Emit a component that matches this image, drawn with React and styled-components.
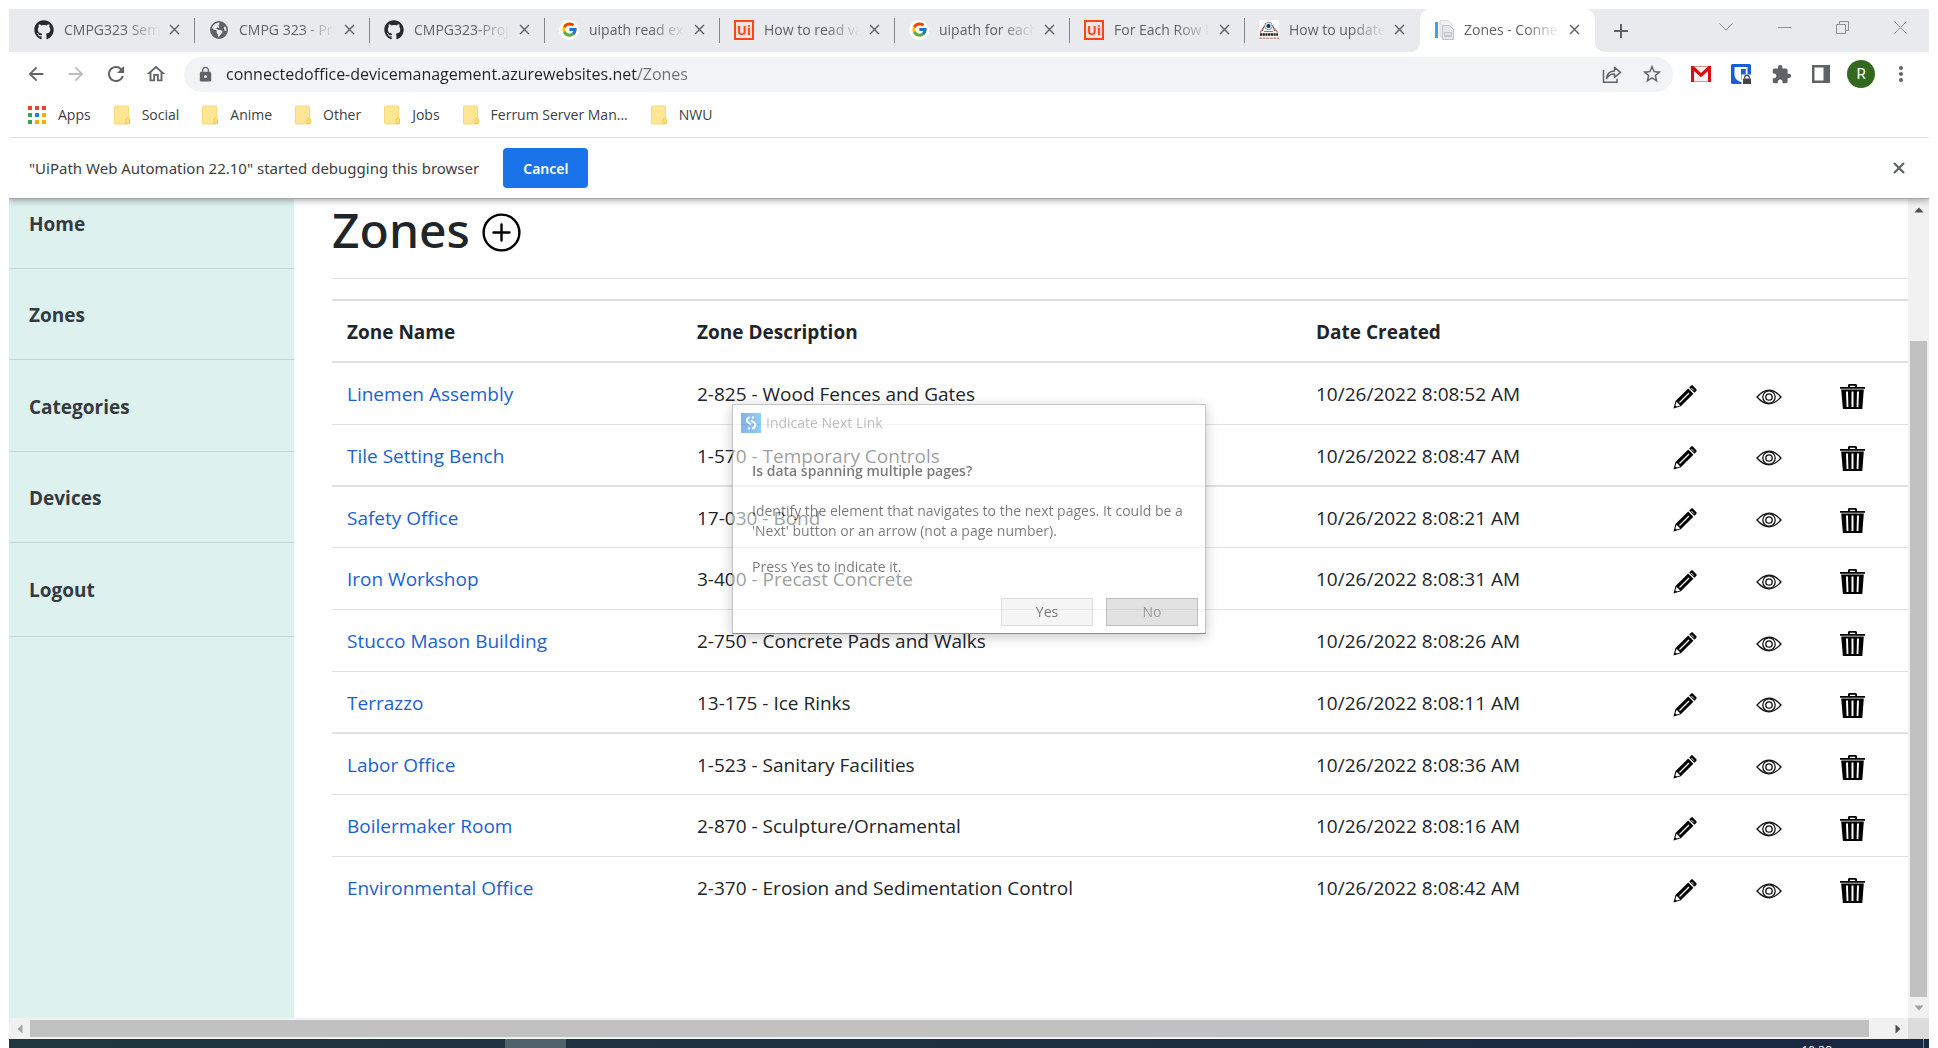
import React from 'react';
import styled, { createGlobalStyle } from 'styled-components';
import { FaGithub, FaEarthAmericas } from 'react-icons/fa6';
import { FcGoogle } from 'react-icons/fc';
import {
  MdAdd,
  MdArrowBack,
  MdArrowForward,
  MdClose,
  MdExtension,
  MdLock,
  MdMoreVert,
  MdOutlineHome,
  MdRefresh,
  MdStarOutline,
} from 'react-icons/md';

const font = `'Open Sans', 'Noto Sans', sans-serif`;

const GlobalStyle = createGlobalStyle`
  *, *::before, *::after { box-sizing: border-box; }
  body {
    margin: 0;
    background: #fff;
    color: #212529;
    font-family: ${font};
    overflow: hidden;
  }
  button, input { font-family: inherit; }
  svg { display: block; flex: none; }
`;

const Screen = styled.div`
  height: 100vh;
  padding: 9px 9px 0;
  display: flex;
  flex-direction: column;
`;

const IconButton = styled.button`
  flex: none;
  width: ${(p) => p.$width || 40}px;
  height: 28px;
  padding: 0;
  border: 0;
  background: none;
  color: ${(p) => p.$color || '#5f6368'};
  display: flex;
  align-items: center;
  justify-content: center;
`;

/* ---------- tab strip ---------- */

const TabStrip = styled.header`
  flex: none;
  height: 43px;
  padding-left: 11px;
  background: #e8eaed;
  display: flex;
  align-items: center;
`;

const Tab = styled.div`
  position: relative;
  flex: 0 1 175px;
  min-width: 0;
  height: 43px;
  padding: 0 8px 2px 14px;
  display: flex;
  align-items: center;
  gap: 10px;
  border-radius: 10px 10px 0 0;
  background: ${(p) => (p.$active ? '#fff' : 'transparent')};

  &::before,
  &::after {
    content: '';
    position: absolute;
    bottom: 0;
    width: 10px;
    height: 10px;
    display: ${(p) => (p.$active ? 'block' : 'none')};
  }
  &::before {
    left: -10px;
    background: radial-gradient(circle at 0 0, transparent 10px, #fff 10px);
  }
  &::after {
    right: -10px;
    background: radial-gradient(circle at 100% 0, transparent 10px, #fff 10px);
  }
`;

const TabDivider = styled.span`
  position: absolute;
  right: 0;
  top: 9px;
  width: 1px;
  height: 25px;
  background: #80868b;
`;

const TabTitle = styled.span`
  flex: 1;
  min-width: 0;
  overflow: hidden;
  white-space: nowrap;
  font-size: 14px;
  line-height: 24px;
  color: #5f6368;
  mask-image: linear-gradient(to right, #000 62px, transparent 96px);
`;

const CloseTab = styled(IconButton)`
  width: 26px;
  margin-left: -9px;
`;

const Favicon = styled.span`
  flex: none;
  width: 20px;
  height: 20px;
  display: flex;
  align-items: center;
  justify-content: center;
  border-radius: ${(p) => (p.$round ? '50%' : '0')};
  background: ${(p) => (p.$round ? '#fff' : 'transparent')};
  color: ${(p) => p.$color || '#24292f'};
`;

const UiMark = styled.span`
  width: 20px;
  height: 20px;
  border: 2px solid #fa4616;
  color: #fa4616;
  background: #f5e3df;
  font-size: 13px;
  font-weight: 700;
  line-height: 16px;
  text-align: center;
`;

const WindowButtons = styled.div`
  margin-left: auto;
  height: 36px;
  display: flex;
  align-items: center;
  align-self: flex-start;
`;

/* ---------- address bar ---------- */

const Toolbar = styled.div`
  flex: none;
  height: 44px;
  padding: 0 8px 0 7px;
  display: flex;
  align-items: center;
`;

const Omnibox = styled.label`
  flex: 1;
  height: 35px;
  margin: 0 8px;
  padding: 0 7px 0 13px;
  border-radius: 18px;
  background: #f1f3f4;
  display: flex;
  align-items: center;
  gap: 12px;
  color: #5f6368;
`;

const Address = styled.input`
  flex: 1;
  min-width: 0;
  height: 28px;
  padding: 0;
  border: 0;
  outline: 0;
  font-size: 16px;
  color: transparent;
  background: linear-gradient(to right, #202124 412px, #6b7075 412px);
  background-clip: text;
  -webkit-background-clip: text;
`;

const Avatar = styled.button`
  flex: none;
  width: 28px;
  height: 28px;
  margin: 0 6px;
  padding: 0;
  border: 0;
  border-radius: 50%;
  background: #33691e;
  color: #fff;
  font-family: Roboto, sans-serif;
  font-size: 15px;
`;

/* ---------- bookmarks ---------- */

const Bookmarks = styled.nav`
  flex: none;
  height: 42px;
  padding: 0 19px 3px;
  border-bottom: 1px solid #dadce0;
  display: flex;
  align-items: center;
  gap: 23px;
`;

const Bookmark = styled.a`
  display: flex;
  align-items: center;
  gap: 12px;
  font-size: 14px;
  line-height: 20px;
  color: #3c4043;
  text-decoration: none;
  white-space: nowrap;
`;

const AppsGrid = styled.span`
  display: grid;
  grid-template-columns: repeat(3, 4px);
  gap: 3px;
`;

const Dot = styled.span`
  height: 4px;
  background: ${(p) => p.$color};
`;

/* ---------- debugging notice ---------- */

const Notice = styled.div`
  position: relative;
  z-index: 1;
  flex: none;
  height: 61px;
  padding: 0 16px 0 20px;
  display: flex;
  align-items: center;
  gap: 24px;
  background: #fff;
  border-bottom: 1px solid #a5a8aa;
  box-shadow: 0 2px 6px rgba(0, 0, 0, 0.3);
  clip-path: inset(0 0 -10px 0);
  font-family: 'Noto Sans', sans-serif;
  font-size: 15px;
  color: #3c4043;
`;

const CancelButton = styled.button`
  height: 40px;
  padding: 0 20px;
  border: 0;
  border-radius: 4px;
  background: #1a73e8;
  color: #fff;
  font-size: 14px;
  font-weight: 600;
`;

const NoticeClose = styled(IconButton)`
  margin-left: auto;
  width: 28px;
`;

/* ---------- page ---------- */

const Viewport = styled.div`
  flex: 1;
  min-height: 0;
  display: flex;
`;

const Sidebar = styled.nav`
  flex: none;
  width: 285px;
  background: #ddf1ef;
  display: flex;
  flex-direction: column;
`;

const SideItem = styled.a`
  height: ${(p) => p.$height || 91}px;
  padding: 0 20px ${(p) => p.$bottom || 32}px;
  border: 0;
  border-bottom: 1px solid #c3d8d6;
  background: none;
  display: flex;
  align-items: flex-end;
  font-size: 19px;
  font-weight: 700;
  line-height: 24px;
  color: #343a40;
  text-decoration: none;
`;

const Main = styled.main`
  flex: 1;
  min-width: 0;
  padding-left: 38px;
`;

const TitleRow = styled.div`
  height: 80px;
  border-bottom: 1px solid #e0e1e2;
  display: flex;
  align-items: flex-start;
  gap: 12px;
`;

const Title = styled.h1`
  margin: 0;
  font-family: 'Noto Sans', sans-serif;
  font-size: 48px;
  font-weight: 500;
  line-height: 62px;
`;

const AddLink = styled.a`
  padding-top: 14px;
  color: #000;
`;

const Table = styled.table`
  width: 100%;
  margin-top: 20px;
  table-layout: fixed;
  border-collapse: separate;
  border-spacing: 0;
  font-size: 19px;
  line-height: 28px;
`;

const Col = styled.col`
  width: ${(p) => (p.$width ? `${p.$width}px` : 'auto')};
`;

const HeadCell = styled.th`
  height: 62px;
  padding: 2px 15px 0;
  border-top: 2px solid #dee2e6;
  text-align: left;
  font-weight: 700;
`;

const Row = styled.tr`
  height: 62px;
  &:nth-child(4n + 2) { height: 61px; }
  &:first-child { height: 63px; }
`;

const Cell = styled.td`
  padding: 1px 15px 0;
  border-top: ${(p) => (p.$thick ? 2 : 1)}px solid #dee2e6;
  white-space: nowrap;
`;

const ZoneLink = styled.a`
  color: #1b62d0;
  text-decoration: none;
`;

const ActionLink = styled.a`
  display: block;
  width: 26px;
  padding-top: 5px;
  color: #000;
`;

/* ---------- scroll bars and taskbar ---------- */

const VerticalScroll = styled.div`
  flex: none;
  width: 21px;
  padding: 0 2px;
  background: #f1f1f1;
  display: flex;
  flex-direction: column;
`;

const HorizontalScroll = styled.div`
  flex: none;
  height: 21px;
  background: #f1f1f1;
  display: flex;
  align-items: center;
`;

const ScrollArrow = styled.span`
  flex: none;
  width: ${(p) => (p.$wide ? 21 : 17)}px;
  height: 21px;
  display: flex;
  align-items: center;
  justify-content: center;
`;

const Thumb = styled.div`
  flex: 1;
  background: #c1c1c1;
`;

const VerticalThumb = styled(Thumb)`
  margin-top: 121px;
`;

const HorizontalThumb = styled(Thumb)`
  height: 17px;
  margin-right: 18px;
`;

const Corner = styled.span`
  width: 21px;
  height: 21px;
  background: #dcdcdc;
`;

const Taskbar = styled.footer`
  flex: none;
  height: 9px;
  padding: 0 5px 0 496px;
  overflow: hidden;
  background: linear-gradient(to right, #20373f, #1e3040 50%, #1a2742);
  display: flex;
  align-items: flex-start;
`;

const RunningApp = styled.span`
  width: 61px;
  height: 9px;
  background: #51636a;
`;

const Clock = styled.time`
  margin-left: auto;
  padding-top: 4px;
  padding-right: 91px;
  font-size: 12px;
  line-height: 16px;
  color: #fff;
`;

const DesktopEdge = styled.span`
  width: 1px;
  height: 9px;
  background: #76808e;
`;

/* ---------- dialog ---------- */

const Overlay = styled.div`
  position: fixed;
  inset: 0;
  z-index: 2;
  padding-bottom: 10px;
  display: flex;
  align-items: center;
  justify-content: center;
  pointer-events: none;
`;

const Dialog = styled.section`
  width: 474px;
  padding: 8px 7px 7px 8px;
  border: 1px solid #999;
  border-bottom-color: #333;
  background: #fff;
  box-shadow: 0 3px 12px rgba(0, 0, 0, 0.4);
  opacity: 0.56;
  pointer-events: auto;
  font-size: 14px;
  line-height: 20px;
  color: #111;
`;

const DialogHeader = styled.div`
  display: flex;
  align-items: center;
  gap: 5px;
  color: #8c8c8c;
`;

const DialogBody = styled.div`
  padding: 28px 0 0 11px;
`;

const Question = styled.h2`
  margin: 0;
  font-size: 14px;
  font-weight: 600;
  line-height: 20px;
`;

const Paragraph = styled.p`
  margin: ${(p) => p.$top}px 0 0;
`;

const DialogButtons = styled.div`
  margin-top: 21px;
  display: flex;
  justify-content: flex-end;
  gap: 13px;
`;

const DialogButton = styled.button`
  width: 92px;
  height: 28px;
  padding: 0;
  border: ${(p) => (p.$focused ? '1px solid #8a8a8a' : '1px solid #c4c4c4')};
  background: ${(p) => (p.$focused ? '#cbcbcb' : '#ededed')};
  color: ${(p) => (p.$focused ? '#555' : '#111')};
  font-size: 14px;
  line-height: 20px;
`;

/* ---------- drawings ---------- */

const FolderIcon = () => (
  <svg width="16" height="20" viewBox="0 0 16 20">
    <rect x="0.5" y="1" width="14" height="18" rx="1" fill="#fee695" stroke="#f8d977" />
    <path d="M12 18.5v-4.5l1.6-1.4 1.9 1.4v4.5z" fill="#fee07e" stroke="#f0c94f" />
  </svg>
);

const LearningIcon = () => (
  <svg width="20" height="20" viewBox="0 0 20 20">
    <rect width="20" height="20" fill="#fbfbfb" />
    <path d="M3.5 11a6 6.5 0 1 1 12 0" fill="none" stroke="#555b66" strokeWidth="1.2" />
    <path d="M1 12.5l3-4M18.5 12.5l-3-4" stroke="#d77" strokeWidth="1.3" />
    <circle cx="9.5" cy="6" r="3.8" fill="#dce6ee" stroke="#788" strokeWidth="0.8" />
    <circle cx="9.5" cy="6" r="2" fill="#1f2f4a" />
    <path d="M5 11.5h9" stroke="#c66" />
    <path d="M1 14.5h18" stroke="#222" strokeWidth="2.6" strokeDasharray="2.2 0.5" />
    <path d="M0 18.2h20" stroke="#d98a8a" strokeWidth="1.6" strokeDasharray="3 0.6" />
  </svg>
);

const DocsIcon = () => (
  <svg width="20" height="20" viewBox="0 0 20 20">
    <path d="M1 2h3v16H1z" fill="#4a9edb" />
    <path d="M6 0.5h8l4 4V17H6z" fill="#eef0f2" stroke="#d4d8dc" />
    <path d="M8.5 5.5h7l4 4V19.5h-11z" fill="#e3e6ea" stroke="#bfc5cb" />
    <path d="M10 12h8v5h-8z" fill="#c3c8ce" />
    <path d="M11 14h6" stroke="#fff" />
  </svg>
);

const ChevronDown = () => (
  <svg width="14" height="8" viewBox="0 0 14 8" fill="none" stroke="#8d9093">
    <path d="M0.5 0.5 7 7l6.5-6.5" />
  </svg>
);

const MinimizeIcon = () => (
  <svg width="13" height="13" viewBox="0 0 13 13" stroke="#8d9093">
    <path d="M0 6.5h13" />
  </svg>
);

const RestoreIcon = () => (
  <svg width="13" height="13" viewBox="0 0 13 13" fill="none" stroke="#8d9093">
    <path d="M0.5 3.5h9v9h-9zM3.5 3.5v-3h9v9h-3" />
  </svg>
);

const WindowCloseIcon = () => (
  <svg width="13" height="13" viewBox="0 0 13 13" stroke="#8d9093">
    <path d="M0.5 0.5l12 12M12.5 0.5l-12 12" />
  </svg>
);

const DismissIcon = () => (
  <svg width="12" height="12" viewBox="0 0 12 12" stroke="#5f6368" strokeWidth="2.2">
    <path d="M1 1l10 10M11 1L1 11" />
  </svg>
);

const ShareIcon = () => (
  <svg width="20" height="20" viewBox="0 0 20 20" fill="none" stroke="#5f6368" strokeWidth="1.5">
    <path d="M1.5 6v12.2h13.5v-3.5" />
    <path d="M4.5 14.5c0.5-5 3.5-7.5 8-7.6V3.3l6 5-6 5V9.9c-3.8 0-6 1.2-8 4.6z" strokeLinejoin="round" />
  </svg>
);

const GmailIcon = () => (
  <svg width="20" height="16" viewBox="0 0 20 16">
    <path d="M0 16V0h20v16z" fill="#fbf3f2" />
    <path d="M0 0.5h20M0 15.5h20" stroke="#dc8f8a" />
    <path d="M0 16V0h2.5l7.5 7 7.5-7H20v16h-3V5l-7 6.2L3 5v11z" fill="#d90d0d" />
  </svg>
);

const ShieldIcon = () => (
  <svg width="21" height="21" viewBox="0 0 21 21">
    <rect width="20" height="20" rx="1.5" fill="#175ddc" />
    <path d="M3.5 3h13v8c0 4-4 6-6.5 7.2C7.5 17 3.5 15 3.5 11z" fill="#fff" />
    <path d="M10 5h4.8v6c0 2.6-2.6 4-4.8 5z" fill="#175ddc" />
    <path d="M10.5 10.5h10.5v10.5H10.5z" fill="#fff" />
    <path d="M12 14.5h8V20h-8z" fill="#444" />
    <path d="M13.8 14.5v-1.2a2.2 2.2 0 0 1 4.4 0v1.2" fill="none" stroke="#444" strokeWidth="1.4" />
  </svg>
);

const SidePanelIcon = () => (
  <svg width="18" height="18" viewBox="0 0 18 18">
    <path d="M0 0h18v18H0zM2.5 2.5v13h9v-13z" fill="#5f6368" fillRule="evenodd" />
  </svg>
);

const PlusCircle = () => (
  <svg width="39" height="39" viewBox="0 0 39 39" fill="none" stroke="#000" strokeWidth="2.4">
    <circle cx="19.5" cy="19.5" r="17.9" />
    <path d="M19.5 11.5v16M11.5 19.5h16" strokeLinecap="round" />
  </svg>
);

const PencilIcon = () => (
  <svg width="24" height="24" viewBox="0 0 24 24">
    <path d="M0.5 23.5 2.5 16 15.2 3.5l5.2 5.2L7.8 21.3z" fill="#000" />
    <path d="M16.2 2.6 18 0.8c0.6-0.6 1.4-0.6 2 0l3.2 3.2c0.6 0.6 0.6 1.4 0 2L21.4 7.8z" fill="#000" />
    <path d="M6.5 17.5 16 8" stroke="#fff" strokeWidth="1.3" />
    <path d="M2.3 20.4l1.3-3.6 3.6 3.6-3.4 1.2z" fill="#fff" />
    <path d="M18.3 2.9l2.7 2.7" stroke="#fff" strokeWidth="0.9" />
  </svg>
);

const EyeIcon = () => (
  <svg width="26" height="16" viewBox="0 0 26 16" fill="none" stroke="#111" strokeWidth="1.3">
    <path d="M1 8C5 3.5 9 1.2 13 1.2S21 3.5 25 8c-4 4.5-8 6.8-12 6.8S5 12.5 1 8z" />
    <circle cx="13" cy="8" r="6.2" />
    <circle cx="13" cy="8" r="3.2" />
  </svg>
);

const TrashIcon = () => (
  <svg width="25" height="25" viewBox="0 0 25 25">
    <path d="M8 3V1.5C8 0.6 8.6 0 9.5 0h6c0.900 0 1.5 0.6 1.5 1.5V3h8v1.8H0V3zM9.8 3h5.4V1.8H9.8z" fill="#000" fillRule="evenodd" />
    <path d="M1.2 5.6h22.6L22.3 25H2.9zM6 7.5l0.6 15.5h1.8L8 7.5zM11.5 7.5V23h2V7.5zM17 7.5l-0.4 15.5h1.8L19 7.5z" fill="#000" fillRule="evenodd" />
  </svg>
);

const ArrowIcon = ({ rotate = 0, color = '#505050' }) => (
  <svg width="10" height="10" viewBox="0 0 10 10">
    <path d="M0.5 7.5 5 2.5l4.5 5z" fill={color} transform={`rotate(${rotate} 5 5)`} />
  </svg>
);

const StudioIcon = () => (
  <svg width="20" height="20" viewBox="0 0 20 20">
    <defs>
      <linearGradient id="studio" x1="0" x2="1">
        <stop offset="0" stopColor="#1f78dc" />
        <stop offset="1" stopColor="#38a8f0" />
      </linearGradient>
    </defs>
    <rect width="20" height="20" fill="url(#studio)" />
    <path d="M9 4.2C5.8 4.6 5 8 7.2 9.5l3 2" fill="none" stroke="#fff" strokeWidth="2" />
    <path d="M10 7.5l3 1.8c2.4 1.8 1.6 5.6-2 6.3" fill="none" stroke="#fff" strokeWidth="2" />
    <circle cx="12" cy="4.5" r="1.2" fill="#fff" />
    <circle cx="8" cy="15.5" r="1.2" fill="#fff" />
  </svg>
);

/* ---------- data ---------- */

const favicons = {
  github: <Favicon><FaGithub size={20} /></Favicon>,
  globe: <Favicon $color="#5f6368"><FaEarthAmericas size={18} /></Favicon>,
  google: <Favicon $round><FcGoogle size={17} /></Favicon>,
  ui: <Favicon><UiMark>Ui</UiMark></Favicon>,
  learning: <Favicon><LearningIcon /></Favicon>,
  docs: <Favicon><DocsIcon /></Favicon>,
};

const tabs = [
  ['github', 'CMPG323 Semester'],
  ['globe', 'CMPG 323 - Project'],
  ['github', 'CMPG323-Project'],
  ['google', 'uipath read excel'],
  ['ui', 'How to read value'],
  ['google', 'uipath for each row'],
  ['ui', 'For Each Row In'],
  ['learning', 'How to update'],
  ['docs', 'Zones - Connected'],
];

const appColors = ['#ea4335', '#ea4335', '#ea4335', '#34a35a', '#1a84f0', '#f9ab00', '#34a35a', '#f9ab00', '#f9ab00'];
const folders = ['Social', 'Anime', 'Other', 'Jobs', 'Ferrum Server Man...', 'NWU'];

const zones = [
  ['Linemen Assembly', '2-825 - Wood Fences and Gates', '52'],
  ['Tile Setting Bench', '1-570 - Temporary Controls', '47'],
  ['Safety Office', '17-030 - Bond', '21'],
  ['Iron Workshop', '3-400 - Precast Concrete', '31'],
  ['Stucco Mason Building', '2-750 - Concrete Pads and Walks', '26'],
  ['Terrazzo', '13-175 - Ice Rinks', '11'],
  ['Labor Office', '1-523 - Sanitary Facilities', '36'],
  ['Boilermaker Room', '2-870 - Sculpture/Ornamental', '16'],
  ['Environmental Office', '2-370 - Erosion and Sedimentation Control', '42'],
];

const thickRows = [0, 2, 6];

export default function App() {
  return (
    <Screen>
      <GlobalStyle />
      <TabStrip>
        {tabs.map(([icon, title], i) => (
          <Tab key={title} $active={i === 8}>
            {favicons[icon]}
            <TabTitle>{title}</TabTitle>
            <CloseTab aria-label="Close tab"><MdClose size={17} /></CloseTab>
            {i < 7 && <TabDivider />}
          </Tab>
        ))}
        <IconButton $width={52} aria-label="New tab"><MdAdd size={24} /></IconButton>
        <WindowButtons>
          <IconButton $width={58} aria-label="Search tabs"><ChevronDown /></IconButton>
          <IconButton $width={58} aria-label="Minimize"><MinimizeIcon /></IconButton>
          <IconButton $width={58} aria-label="Restore"><RestoreIcon /></IconButton>
          <IconButton $width={58} aria-label="Close"><WindowCloseIcon /></IconButton>
        </WindowButtons>
      </TabStrip>

      <Toolbar>
        <IconButton aria-label="Back"><MdArrowBack size={22} /></IconButton>
        <IconButton aria-label="Forward" $color="#babcbe"><MdArrowForward size={22} /></IconButton>
        <IconButton aria-label="Reload"><MdRefresh size={24} /></IconButton>
        <IconButton aria-label="Home"><MdOutlineHome size={22} /></IconButton>
        <Omnibox>
          <MdLock size={17} />
          <Address aria-label="Address" defaultValue="connectedoffice-devicemanagement.azurewebsites.net/Zones" />
          <IconButton $width={28} aria-label="Share"><ShareIcon /></IconButton>
          <IconButton $width={28} aria-label="Bookmark this page"><MdStarOutline size={22} /></IconButton>
        </Omnibox>
        <IconButton aria-label="Gmail"><GmailIcon /></IconButton>
        <IconButton aria-label="Password manager"><ShieldIcon /></IconButton>
        <IconButton aria-label="Extensions"><MdExtension size={21} /></IconButton>
        <IconButton aria-label="Side panel"><SidePanelIcon /></IconButton>
        <Avatar>R</Avatar>
        <IconButton aria-label="Menu"><MdMoreVert size={24} /></IconButton>
      </Toolbar>

      <Bookmarks>
        <Bookmark href="#apps">
          <AppsGrid>{appColors.map((c, i) => <Dot key={i} $color={c} />)}</AppsGrid>
          Apps
        </Bookmark>
        {folders.map((name) => (
          <Bookmark key={name} href="#folder"><FolderIcon />{name}</Bookmark>
        ))}
      </Bookmarks>

      <Notice>
        <span>"UiPath Web Automation 22.10" started debugging this browser</span>
        <CancelButton>Cancel</CancelButton>
        <NoticeClose aria-label="Dismiss"><DismissIcon /></NoticeClose>
      </Notice>

      <Viewport>
        <Sidebar>
          <SideItem href="#home" $height={70}>Home</SideItem>
          <SideItem href="#zones">Zones</SideItem>
          <SideItem href="#categories" $height={92}>Categories</SideItem>
          <SideItem href="#devices">Devices</SideItem>
          <SideItem as="button" $height={94} $bottom={34}>Logout</SideItem>
        </Sidebar>
        <Main>
          <TitleRow>
            <Title>Zones</Title>
            <AddLink href="#create" aria-label="Add zone"><PlusCircle /></AddLink>
          </TitleRow>
          <Table>
            <colgroup>
              <Col $width={350} />
              <Col />
              <Col $width={357} />
              <Col $width={83} />
              <Col $width={84} />
              <Col $width={83} />
            </colgroup>
            <thead>
              <tr>
                <HeadCell>Zone Name</HeadCell>
                <HeadCell>Zone Description</HeadCell>
                <HeadCell>Date Created</HeadCell>
                <HeadCell as="td" />
                <HeadCell as="td" />
                <HeadCell as="td" />
              </tr>
            </thead>
            <tbody>
              {zones.map(([name, description, seconds], i) => {
                const thick = thickRows.includes(i);
                return (
                  <Row key={name}>
                    <Cell $thick={thick}><ZoneLink href="#zone">{name}</ZoneLink></Cell>
                    <Cell $thick={thick}>{description}</Cell>
                    <Cell $thick={thick}>10/26/2022 8:08:{seconds} AM</Cell>
                    <Cell $thick={thick}><ActionLink href="#edit" aria-label="Edit"><PencilIcon /></ActionLink></Cell>
                    <Cell $thick={thick}><ActionLink href="#details" aria-label="Details"><EyeIcon /></ActionLink></Cell>
                    <Cell $thick={thick}><ActionLink href="#delete" aria-label="Delete"><TrashIcon /></ActionLink></Cell>
                  </Row>
                );
              })}
            </tbody>
          </Table>
        </Main>
        <VerticalScroll>
          <ScrollArrow><ArrowIcon /></ScrollArrow>
          <VerticalThumb />
          <ScrollArrow><ArrowIcon rotate={180} color="#a3a3a3" /></ScrollArrow>
        </VerticalScroll>
      </Viewport>

      <HorizontalScroll>
        <ScrollArrow $wide><ArrowIcon rotate={270} color="#a3a3a3" /></ScrollArrow>
        <HorizontalThumb />
        <ScrollArrow $wide><ArrowIcon rotate={90} /></ScrollArrow>
        <Corner />
      </HorizontalScroll>

      <Taskbar>
        <RunningApp />
        <Clock>10:38</Clock>
        <DesktopEdge />
      </Taskbar>

      <Overlay>
        <Dialog role="dialog" aria-labelledby="dialog-title">
          <DialogHeader>
            <StudioIcon />
            <span id="dialog-title">Indicate Next Link</span>
          </DialogHeader>
          <DialogBody>
            <Question>Is data spanning multiple pages?</Question>
            <Paragraph $top={20}>
              Identify the element that navigates to the next pages. It could be a<br />
              'Next' button or an arrow (not a page number).
            </Paragraph>
            <Paragraph $top={16}>Press Yes to indicate it.</Paragraph>
          </DialogBody>
          <DialogButtons>
            <DialogButton>Yes</DialogButton>
            <DialogButton $focused>No</DialogButton>
          </DialogButtons>
        </Dialog>
      </Overlay>
    </Screen>
  );
}
